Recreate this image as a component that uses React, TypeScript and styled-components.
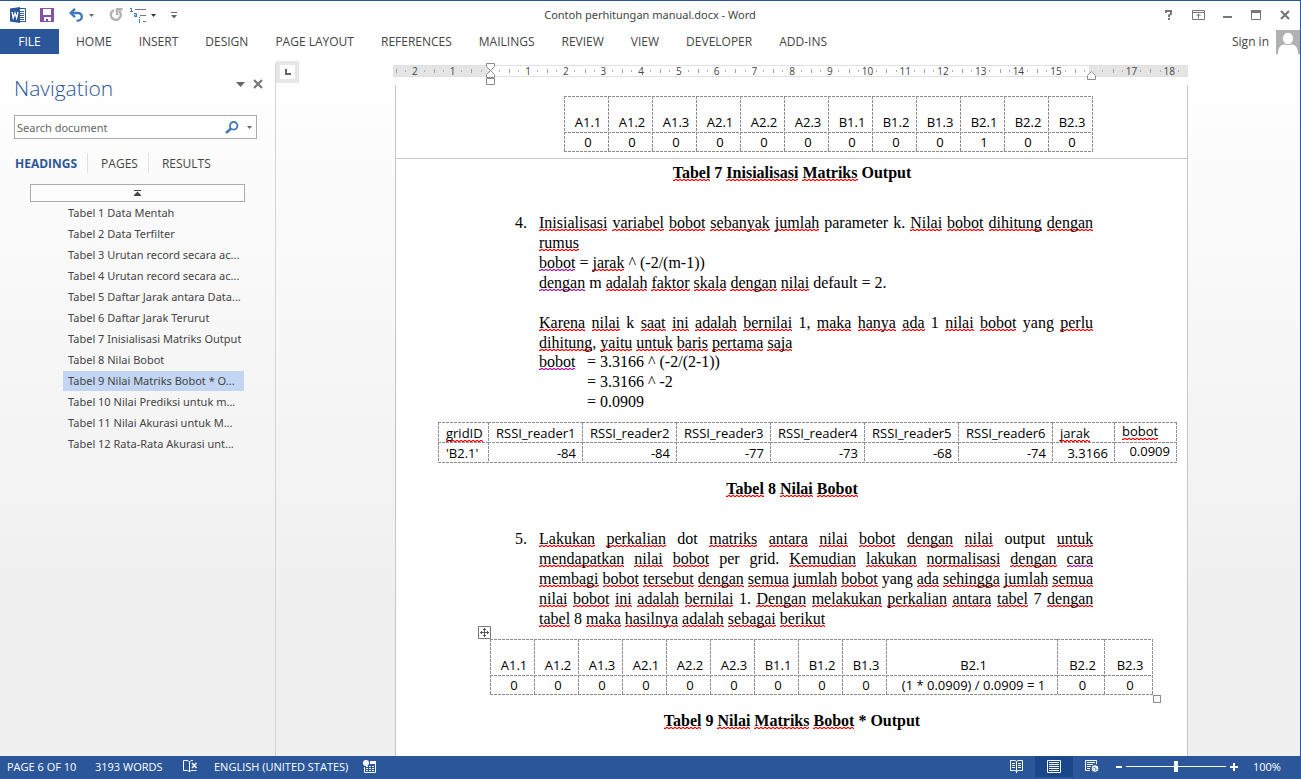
import React from "react";
import styled, { createGlobalStyle, css } from "styled-components";

const BLUE = "#2b579a";
const UI = '"Open Sans", "Noto Sans", sans-serif';
const UI_SMALL = '"Noto Sans", "Open Sans", sans-serif';
const SERIF = '"Liberation Serif", "Times New Roman", serif';

const GlobalStyle = createGlobalStyle`
  * { box-sizing: border-box; }
  body { margin: 0; font-family: ${UI}; font-size: 12px; color: #444; }
  button, input { font: inherit; color: inherit; }
  button { border: 0; padding: 0; background: none; }
  svg { display: block; }
`;

const Window = styled.div`
  display: flex;
  flex-direction: column;
  height: 100vh;
  border-top: 1px solid ${BLUE};
  border-right: 1px solid ${BLUE};
  background: linear-gradient(#fff 0, #fff 54px, #fdfdfd 120px, #efefef 620px);
`;

/* ---------- title bar ---------- */

const TitleBar = styled.header`
  display: grid;
  grid-template-columns: 1fr auto 1fr;
  align-items: center;
  flex: none;
  height: 28px;
`;

const QuickAccess = styled.div`
  display: flex;
  align-items: center;
  padding-left: 10px;
`;

const ToolButton = styled.button<{ $gap: number }>`
  display: flex;
  align-items: center;
  gap: 5px;
  margin-right: ${(p) => p.$gap}px;
`;

const DocTitle = styled.h1`
  margin: 0;
  font-family: ${UI_SMALL};
  font-size: 11px;
  font-weight: 400;
  line-height: 20px;
`;

const WindowButtons = styled.div`
  display: flex;
  justify-content: flex-end;
  align-items: center;
  gap: 15px;
  padding-right: 8px;
`;

const WindowButton = styled.button`
  display: flex;
  align-items: center;
  justify-content: center;
  width: 14px;
  height: 14px;
`;

/* ---------- ribbon ---------- */

const Ribbon = styled.nav`
  display: flex;
  align-items: center;
  flex: none;
  height: 25px;
`;

const FileTab = styled.button`
  width: 59px;
  height: 25px;
  margin-right: 17px;
  background: ${BLUE};
  color: #fff;
`;

const RibbonTab = styled.button`
  margin-right: 27px;
  line-height: 25px;
  white-space: nowrap;
`;

const Account = styled.div`
  display: flex;
  align-items: center;
  gap: 7px;
  margin-left: auto;
`;

/* ---------- navigation pane ---------- */

const Main = styled.div`
  display: flex;
  flex: 1;
  min-height: 0;
`;

const NavPane = styled.aside`
  flex: none;
  width: 276px;
  margin-top: 9px;
  padding: 9px 18px 0 14px;
  border-right: 1px solid #d4d4d4;
`;

const NavHead = styled.div`
  display: flex;
  align-items: center;
  height: 32px;
  margin-right: -6px;
`;

const NavTitle = styled.h2`
  flex: 1;
  margin: 0;
  color: ${BLUE};
  font-size: 21px;
  font-weight: 300;
  line-height: 32px;
`;

const PaneButton = styled.button`
  margin: 0 0 8px 8px;
`;

const SearchBox = styled.form`
  display: flex;
  align-items: center;
  height: 24px;
  margin-top: 11px;
  padding: 0 4px 0 2px;
  border: 1px solid #ababab;
  background: #fff;
`;

const SearchInput = styled.input`
  flex: 1;
  min-width: 0;
  padding: 0;
  border: 0;
  outline: 0;
  background: none;
  font-family: ${UI_SMALL};
  font-size: 11px;
  &::placeholder { color: #666; opacity: 1; }
`;

const PaneTabs = styled.div`
  display: flex;
  margin-top: 14px;
`;

const PaneTab = styled.button<{ $active?: boolean }>`
  height: 20px;
  padding: 0 10px 0 13px;
  border-left: 1px solid #e1e1e1;
  &:first-child { padding-left: 1px; border-left: 0; }
  ${(p) => p.$active && css`color: ${BLUE}; font-weight: 700;`}
`;

const JumpTop = styled.button`
  display: flex;
  align-items: center;
  justify-content: center;
  width: 215px;
  height: 18px;
  margin: 11px 0 0 16px;
  border: 1px solid #ababab;
  background: #fdfdfd;
`;

const HeadingList = styled.ul`
  margin: 1px 0 0 49px;
  padding: 0;
  list-style: none;
`;

const HeadingLink = styled.a<{ $current: boolean }>`
  display: block;
  width: 181px;
  height: 20px;
  margin-bottom: 1px;
  padding-left: 5px;
  background: ${(p) => (p.$current ? "#c2d5f2" : "transparent")};
  color: inherit;
  font-family: ${UI_SMALL};
  font-size: 11px;
  line-height: 20px;
  text-decoration: none;
  white-space: nowrap;
`;

/* ---------- document area ---------- */

const Workspace = styled.main`
  display: flex;
  flex: 1;
  min-width: 0;
  overflow: hidden;
`;

const TabSelector = styled.button`
  display: flex;
  align-items: center;
  justify-content: center;
  flex: none;
  width: 23px;
  height: 22px;
  margin-top: 7px;
  border: 4px solid #e6e6e6;
  background: #fdfdfd;
`;

const Canvas = styled.div`
  display: flex;
  flex-direction: column;
  align-items: center;
  flex: 1;
  padding: 11px 18px 0 0;
`;

const Sheet = styled.div`
  display: flex;
  flex-direction: column;
  flex: 1;
  width: 795px;
`;

const Ruler = styled.div`
  position: relative;
  display: flex;
  flex: none;
  height: 12px;
  margin-bottom: 8px;
  padding-left: 3px;
  border-top: 1px solid #e0e0e0;
  border-bottom: 1px solid #e0e0e0;
  background: linear-gradient(90deg, #e4e4e4 0 97px, #fff 97px calc(100% - 99px), #e4e4e4 calc(100% - 99px));
`;

const RulerCell = styled.span`
  flex: 1;
  background:
    linear-gradient(#a0a0a0, #a0a0a0) 0 50% / 1px 4px no-repeat,
    linear-gradient(#b0b0b0, #b0b0b0) 25% 50% / 1px 2px no-repeat,
    linear-gradient(#b0b0b0, #b0b0b0) 75% 50% / 1px 2px no-repeat;
  font-size: 10px;
  line-height: 11px;
  text-align: center;
`;

const IndentMarker = styled.svg<{ $side: "left" | "right" }>`
  position: absolute;
  ${(p) => (p.$side === "left" ? "left: 93px; top: -3px;" : "right: 92px; top: 5px;")}
`;

const Page = styled.article`
  flex: 1;
  margin-left: 2px;
  border: solid #c6c6c6;
  border-width: 0 1px;
  background: #fff;
  color: #000;
  font-family: ${SERIF};
  font-size: 16px;
  line-height: 20px;
`;

const PageTail = styled.section`
  padding: 11px 94px 6px 95px;
  border-bottom: 1px solid #c6c6c6;
`;

const PageBody = styled.section`
  padding: 4px 94px 0 95px;
`;

const Caption = styled.p`
  margin: 0;
  font-weight: 700;
  text-align: center;
`;

const Step = styled.div`
  display: grid;
  grid-template-columns: 24px 1fr;
  margin: 30px 0 10px 24px;
`;

const Para = styled.p<{ $spaced?: boolean }>`
  margin: ${(p) => (p.$spaced ? "20px 0 0" : "0")};
  text-align: justify;
`;

/* A line whose words must stay together, stretched to the measure. */
const FullLine = styled.span`
  display: block;
  text-align-last: justify;
  white-space: nowrap;
`;

const Formula = styled.div`
  display: grid;
  grid-template-columns: 48px 1fr;
  margin-top: -1px;
`;

const Squiggle = styled.span<{ $context: boolean }>`
  --mark: ${(p) => (p.$context ? "#c0108c" : "#ff0000")};
  --fade: ${(p) => (p.$context ? "#a040ff66" : "#ff000055")};
  background:
    repeating-linear-gradient(90deg, var(--mark) 0 2px, var(--fade) 2px 4px) 0 100% / 100% 1px no-repeat,
    repeating-linear-gradient(90deg, var(--fade) 0 2px, var(--mark) 2px 4px) 0 calc(100% - 1px) / 100% 1px no-repeat;
`;

const dashX = "repeating-linear-gradient(90deg, #8c8c8c 0 3px, transparent 3px 4px)";
const dashY = "repeating-linear-gradient(#8c8c8c 0 3px, transparent 3px 4px)";

const GridHolder = styled.div<{ $place: "right" | "wide" | "left" }>`
  position: relative;
  width: fit-content;
  margin-left: ${(p) => ({ right: "auto", wide: "-53px", left: "-1px" })[p.$place]};
  margin-bottom: ${(p) => (p.$place === "right" ? 0 : 16)}px;
`;

const Grid = styled.table`
  table-layout: fixed;
  border-spacing: 0;
  padding: 0 1px 1px 0;
  background: ${dashX} 0 100% / 100% 1px no-repeat, ${dashY} 100% 0 / 1px 100% no-repeat;
  font-family: ${UI};
  font-size: 13px;
  line-height: 18px;
`;

const cell = css<{ $align?: string; $raised?: boolean }>`
  padding: ${(p) => (p.$raised ? "0 6px 2px 8px" : p.$align === "center" ? "1px 4px 0 8px" : "1px 6px 0 8px")};
  background: ${dashX} 0 0 / 100% 1px no-repeat, ${dashY} 0 0 / 1px 100% no-repeat;
  font-weight: 400;
  white-space: nowrap;
`;

const HeadCell = styled.th<{ $tall?: boolean; $align?: string; $raised?: boolean }>`
  ${cell}
  height: ${(p) => (p.$tall ? 36 : 20)}px;
  ${(p) => p.$tall && "padding-bottom: 1px;"}
  text-align: ${(p) => p.$align ?? "left"};
  vertical-align: bottom;
`;

const DataCell = styled.td<{ $align?: string; $raised?: boolean }>`
  ${cell}
  height: 19px;
  text-align: ${(p) => p.$align ?? "left"};
`;

const MoveHandle = styled.button`
  position: absolute;
  left: -12px;
  top: -13px;
`;

const ResizeHandle = styled.span`
  position: absolute;
  right: -8px;
  bottom: -8px;
  width: 8px;
  height: 8px;
  border: 1px solid #8c8c8c;
  background: #fff;
`;

/* ---------- status bar ---------- */

const StatusBar = styled.footer`
  display: flex;
  align-items: center;
  flex: none;
  height: 23px;
  margin-right: -1px;
  padding: 0 21px 2px 7px;
  background: ${BLUE};
  color: #fff;
  font-size: 11px;
`;

const StatusItem = styled.button<{ $width: number }>`
  width: ${(p) => p.$width}px;
  text-align: left;
  white-space: nowrap;
`;

const ViewButton = styled.button<{ $active?: boolean }>`
  display: flex;
  align-items: center;
  justify-content: center;
  width: 38px;
  height: 21px;
  background: ${(p) => (p.$active ? "#19478a" : "transparent")};
`;

const Views = styled.div`
  display: flex;
  margin-left: auto;
  margin-right: 5px;
`;

const ZoomSlider = styled.input`
  appearance: none;
  width: 100px;
  height: 12px;
  margin: 0 4px;
  background: linear-gradient(#fff, #fff) 0 50% / 100% 1px no-repeat;
  &::-webkit-slider-thumb {
    appearance: none;
    width: 4px;
    height: 11px;
    background: #fff;
  }
`;

const ZoomLevel = styled.button`
  width: 27px;
  margin-left: 15px;
  white-space: nowrap;
`;

/* ---------- icons ---------- */

const Caret = ({ color = "#666", w = 5 }: { color?: string; w?: number }) => (
  <svg width={w} height={Math.ceil(w / 2)} viewBox="0 0 6 3" preserveAspectRatio="none"><path d="M0 0h6L3 3z" fill={color} /></svg>
);

const WordIcon = () => (
  <svg width="16" height="16" viewBox="0 0 16 16">
    <path d="M9 1.5h6.5v13H9z" fill="#fff" stroke={BLUE} />
    <path d="M10 4.5h4M10 6.5h4M10 8.5h4M10 10.5h4M10 12.5h4" stroke={BLUE} />
    <path d="M0 1.6 10 0v16L0 14.4z" fill={BLUE} />
    <path d="m2 5 1.2 6L5 6l1.6 5L8 5" fill="none" stroke="#fff" strokeWidth="1.3" />
  </svg>
);

const SaveIcon = () => (
  <svg width="14" height="14" viewBox="0 0 14 14">
    <path d="M0 0h14v14H0z" fill="#8453a8" />
    <path d="M3 1h8v6H3zM4 9h7v4H8v-2H6v2H4z" fill="#fff" />
  </svg>
);

const UndoIcon = () => (
  <svg width="15" height="14" viewBox="0 0 15 14" fill="none" stroke="#4379b8" strokeWidth="2.4">
    <path d="M1.5 5H9a3.800 3.800 0 0 1 0 7.600H7.500" />
    <path d="M6 .8 1.700 5 6 9.200" />
  </svg>
);

const RedoIcon = () => (
  <svg width="14" height="14" viewBox="0 0 14 14" fill="none" stroke="#b1b1b1" strokeWidth="2.400">
    <path d="M5 2.200A5 5 0 1 0 10 3" />
    <path d="M8 7V1.200h5.500" />
  </svg>
);

const ListIcon = () => (
  <svg width="16" height="16" viewBox="0 0 16 16" fill="none">
    <path d="M0 1.500h1.500V5M0 4.500h3M4 6.500h2.500V10M7 9.500H4.500V8H6M9.500 10v1m0 1v4" stroke="#4379b8" />
    <path d="M5 2.500h11M10 8.500h6M13 14.500h3" stroke="#777" />
  </svg>
);

const CustomizeIcon = () => (
  <svg width="6" height="7" viewBox="0 0 6 7"><path d="M0 .5h6" stroke="#666" /><path d="M0 3h6L3 6.500z" fill="#666" /></svg>
);

const HelpIcon = () => (
  <svg width="8" height="10" viewBox="0 0 8 10" fill="none" stroke="#777" strokeWidth="2">
    <path d="M1 3V1h5v3L4 5.200V7M4 8v2" />
  </svg>
);

const RibbonDisplayIcon = () => (
  <svg width="13" height="10" viewBox="0 0 13 10" fill="none" stroke="#777">
    <path d="M.5.5h12v9H.5zM.5 2.500h12M6.500 8.500V4M4.500 6l2-2 2 2" />
  </svg>
);

const MinimizeIcon = () => <svg width="9" height="10" viewBox="0 0 9 10"><path d="M0 6h9v2H0z" fill="#777" /></svg>;

const MaximizeIcon = () => (
  <svg width="10" height="10" viewBox="0 0 10 10"><path d="M.5.5h9v9h-9z" fill="none" stroke="#777" /><path d="M0 0h10v3H0z" fill="#777" /></svg>
);

const CloseIcon = () => (
  <svg width="10" height="10" viewBox="0 0 10 10"><path d="m1 1 8 8M9 1 1 9" stroke="#777" strokeWidth="2.200" /></svg>
);

const Avatar = () => (
  <svg width="24" height="24" viewBox="0 0 24 24">
    <path d="M0 0h24v24H0z" fill="#b1b1b1" />
    <path d="M2 24c0-6 2-9 6-9.500h8c4 .5 6 3.500 6 9.500z" fill="#fff" />
    <ellipse cx="12" cy="8.500" rx="5.500" ry="6.300" fill="#fff" stroke="#b1b1b1" />
  </svg>
);

const SearchIcon = () => (
  <svg width="14" height="13" viewBox="0 0 14 13" fill="none" stroke="#4379b8">
    <circle cx="8.700" cy="4.800" r="3.800" strokeWidth="1.800" />
    <path d="M6 7.500 1 12" strokeWidth="2.500" />
  </svg>
);

const JumpIcon = () => (
  <svg width="7" height="6" viewBox="0 0 7 6"><path d="M0 0h7v1H0zM3.500 1.500 7 5v1H0V5z" fill="#444" /></svg>
);

const ProofIcon = () => (
  <svg width="15" height="13" viewBox="0 0 15 13" fill="none" stroke="#fff">
    <path d="M6.500 12V2L5 .5H.5v10H5L6.500 12 8 10.500h5.500M6.500 2 8 .5h2" />
    <path d="m9 3 4.500 5M13.500 3 9 8" strokeWidth="1.500" />
  </svg>
);

const MacroIcon = () => (
  <svg width="13" height="13" viewBox="0 0 13 13">
    <circle cx="3" cy="3" r="3" fill="#fff" />
    <path d="M7 1h6v3H7z" fill="#fff" />
    <path d="M1.500 7v5.500h11V3M3 6.500h2M6 6.500h2M9 6.500h2M3 8.500h2M6 8.500h2M9 8.500h2M3 10.500h2M6 10.500h2M9 10.500h2" fill="none" stroke="#fff" />
  </svg>
);

const ReadIcon = () => (
  <svg width="13" height="13" viewBox="0 0 13 13" fill="none" stroke="#fff">
    <path d="M6.500 13V1.500L5 .5H.5v10H5l1.500 1 1.500-1h4.500V.5H8l-1.500 1M2 3.500h3M2 5.500h3M2 7.500h3M8 3.500h3M8 5.500h3M8 7.500h3" />
  </svg>
);

const PrintIcon = () => (
  <svg width="14" height="13" viewBox="0 0 14 13" fill="none" stroke="#fff">
    <path d="M.5.5h13v12H.5zM2 2.500h10M2 4.500h10M2 6.500h10M2 8.500h10M2 10.500h10" />
  </svg>
);

const WebIcon = () => (
  <svg width="14" height="13" viewBox="0 0 14 13" fill="none" stroke="#fff">
    <path d="M5 10.500H.5V.5h11V4M2 2.500h8M2 4.500h6M2 6.500h4M2 8.500h3" />
    <circle cx="10" cy="8.500" r="3.800" fill="#fff" stroke={BLUE} />
    <path d="M8 8.500c1-2 2-.5 3 0s0 2-1 1.500" stroke={BLUE} />
  </svg>
);

/* ---------- content ---------- */

const ribbonTabs = ["HOME", "INSERT", "DESIGN", "PAGE LAYOUT", "REFERENCES", "MAILINGS", "REVIEW", "VIEW", "DEVELOPER", "ADD-INS"];

const headings = [
  "Tabel 1 Data Mentah",
  "Tabel 2 Data Terfilter",
  "Tabel 3 Urutan record secara ac...",
  "Tabel 4 Urutan record secara ac...",
  "Tabel 5 Daftar Jarak antara Data...",
  "Tabel 6 Daftar Jarak Terurut",
  "Tabel 7 Inisialisasi Matriks Output",
  "Tabel 8 Nilai Bobot",
  "Tabel 9 Nilai Matriks Bobot * O...",
  "Tabel 10 Nilai Prediksi untuk m...",
  "Tabel 11 Nilai Akurasi untuk M...",
  "Tabel 12 Rata-Rata Akurasi unt...",
];

const rulerLabels = ["2", "1", "", ...Array.from({ length: 15 }, (_, i) => String(i + 1)), "", "17", "18"];

const gridNames = ["A1.1", "A1.2", "A1.3", "A2.1", "A2.2", "A2.3", "B1.1", "B1.2", "B1.3", "B2.1", "B2.2", "B2.3"];

const weightColumns: [string, string, number][] = [
  ["gridID", "'B2.1'", 50],
  ["RSSI_reader1", "-84", 94],
  ["RSSI_reader2", "-84", 94],
  ["RSSI_reader3", "-77", 94],
  ["RSSI_reader4", "-73", 94],
  ["RSSI_reader5", "-68", 94],
  ["RSSI_reader6", "-74", 94],
  ["jarak", "3.3166", 62],
  ["bobot", "0.0909", 62],
];

/* Words the English proofing dictionary accepts; "~" before a word marks a contextual error. */
const accepted = new Set(["parameter", "k", "m", "default", "yang", "dot", "output", "per", "grid"]);

const Proofed = ({ children }: { children: string }) => (
  <>
    {children.split(/(~?[A-Za-z]+)/).map((part, i) => {
      const word = part.replace("~", "");
      return i % 2 === 1 && !accepted.has(word.toLowerCase())
        ? <Squiggle key={i} $context={part !== word}>{word}</Squiggle>
        : word;
    })}
  </>
);

const MatrixTable = ({ values, widths }: { values: string[]; widths: number[] }) => (
  <Grid style={{ width: widths.reduce((a, b) => a + b, 1) }}>
    <colgroup>{widths.map((w, i) => <col key={i} style={{ width: w }} />)}</colgroup>
    <thead>
      <tr>{gridNames.map((n) => <HeadCell key={n} $tall $align="center">{n}</HeadCell>)}</tr>
    </thead>
    <tbody>
      <tr>{values.map((v, i) => <DataCell key={i} $align="center">{v}</DataCell>)}</tr>
    </tbody>
  </Grid>
);

const initialValues = gridNames.map((n) => (n === "B2.1" ? "1" : "0"));
const resultValues = gridNames.map((n) => (n === "B2.1" ? "(1 * 0.0909) / 0.0909 = 1" : "0"));
const evenWidths = gridNames.map(() => 44);
const resultWidths = [...evenWidths.slice(0, 9), 171, 47, 48];

const multiplyLines = [
  "Lakukan perkalian dot matriks antara nilai bobot dengan nilai output untuk",
  "mendapatkan nilai bobot per grid. Kemudian lakukan normalisasi dengan ~cara",
  "membagi bobot tersebut dengan semua jumlah bobot yang ada sehingga jumlah semua",
  "nilai bobot ini adalah bernilai 1. Dengan melakukan perkalian antara tabel 7 dengan",
];

export default function App() {
  return (
    <>
      <GlobalStyle />
      <Window>
        <TitleBar>
          <QuickAccess>
            <ToolButton $gap={14} aria-label="Word"><WordIcon /></ToolButton>
            <ToolButton $gap={15} aria-label="Save"><SaveIcon /></ToolButton>
            <ToolButton $gap={15} aria-label="Undo"><UndoIcon /><Caret /></ToolButton>
            <ToolButton $gap={7} aria-label="Redo"><RedoIcon /></ToolButton>
            <ToolButton $gap={15} aria-label="Multilevel list"><ListIcon /><Caret color="#333" /></ToolButton>
            <ToolButton $gap={0} aria-label="Customize Quick Access Toolbar"><CustomizeIcon /></ToolButton>
          </QuickAccess>
          <DocTitle>Contoh perhitungan manual.docx - Word</DocTitle>
          <WindowButtons>
            <WindowButton aria-label="Help"><HelpIcon /></WindowButton>
            <WindowButton aria-label="Ribbon Display Options"><RibbonDisplayIcon /></WindowButton>
            <WindowButton aria-label="Minimize"><MinimizeIcon /></WindowButton>
            <WindowButton aria-label="Maximize"><MaximizeIcon /></WindowButton>
            <WindowButton aria-label="Close"><CloseIcon /></WindowButton>
          </WindowButtons>
        </TitleBar>

        <Ribbon>
          <FileTab>FILE</FileTab>
          {ribbonTabs.map((t) => <RibbonTab key={t}>{t}</RibbonTab>)}
          <Account><button>Sign in</button><Avatar /></Account>
        </Ribbon>

        <Main>
          <NavPane>
            <NavHead>
              <NavTitle>Navigation</NavTitle>
              <PaneButton aria-label="Task pane options"><Caret w={9} /></PaneButton>
              <PaneButton aria-label="Close pane"><CloseIcon /></PaneButton>
            </NavHead>
            <SearchBox>
              <SearchInput type="text" aria-label="Search document" placeholder="Search document" />
              <ToolButton $gap={8} type="button" aria-label="Search"><SearchIcon /></ToolButton>
              <ToolButton $gap={0} type="button" aria-label="Search options"><Caret /></ToolButton>
            </SearchBox>
            <PaneTabs>
              <PaneTab $active>HEADINGS</PaneTab>
              <PaneTab>PAGES</PaneTab>
              <PaneTab>RESULTS</PaneTab>
            </PaneTabs>
            <JumpTop aria-label="Jump to the beginning"><JumpIcon /></JumpTop>
            <HeadingList>
              {headings.map((h, i) => (
                <li key={h}><HeadingLink href={`#heading-${i + 1}`} $current={i === 8}>{h}</HeadingLink></li>
              ))}
            </HeadingList>
          </NavPane>

          <Workspace>
            <TabSelector aria-label="Left tab">
              <svg width="6" height="6" viewBox="0 0 6 6"><path d="M1 0v5h5" fill="none" stroke="#666" strokeWidth="2" /></svg>
            </TabSelector>
            <Canvas>
              <Sheet>
                <Ruler>
                  {rulerLabels.map((l, i) => <RulerCell key={i}>{l}</RulerCell>)}
                  <IndentMarker $side="left" width="9" height="22" viewBox="0 0 9 22" fill="#fff" stroke="#8c8c8c">
                    <path d="M.5.5h8v3l-4 4-4-4zM.5 14.500v-3l4-4 4 4v3zM.5 15.500h8v6h-8z" />
                  </IndentMarker>
                  <IndentMarker $side="right" width="9" height="9" viewBox="0 0 9 9" fill="#fff" stroke="#8c8c8c">
                    <path d="M.5 8.500v-4l4-4 4 4v4z" />
                  </IndentMarker>
                </Ruler>

                <Page>
                  <PageTail>
                    <GridHolder $place="right">
                      <MatrixTable values={initialValues} widths={evenWidths} />
                    </GridHolder>
                  </PageTail>
                  <PageBody>
                    <Caption><Proofed>Tabel 7 Inisialisasi Matriks Output</Proofed></Caption>

                    <Step>
                      <span>4.</span>
                      <div>
                        <Para><Proofed>Inisialisasi variabel bobot sebanyak jumlah parameter k. Nilai bobot dihitung dengan rumus</Proofed></Para>
                        <Para><Proofed>~bobot = jarak ^ (-2/(m-1))</Proofed></Para>
                        <Para><Proofed>~dengan m adalah faktor skala dengan nilai default = 2.</Proofed></Para>
                        <Para $spaced><Proofed>Karena nilai k saat ini adalah bernilai 1, maka hanya ada 1 nilai bobot yang perlu dihitung, yaitu untuk baris pertama saja</Proofed></Para>
                        <Formula>
                          <span><Proofed>~bobot</Proofed></span>
                          <span>= 3.3166 ^ (-2/(2-1))<br />= 3.3166 ^ -2<br />= 0.0909</span>
                        </Formula>
                      </div>
                    </Step>

                    <GridHolder $place="wide">
                      <Grid style={{ width: weightColumns.reduce((a, c) => a + c[2], 1) }}>
                        <colgroup>{weightColumns.map(([name, , w]) => <col key={name} style={{ width: w }} />)}</colgroup>
                        <thead>
                          <tr>
                            {weightColumns.map(([name], i) => (
                              <HeadCell key={name} $raised={i === 8}>
                                {name.startsWith("RSSI") ? name : <Proofed>{name}</Proofed>}
                              </HeadCell>
                            ))}
                          </tr>
                        </thead>
                        <tbody>
                          <tr>
                            {weightColumns.map(([name, value], i) => (
                              <DataCell key={name} $raised={i === 8} $align={i ? "right" : "left"}>{value}</DataCell>
                            ))}
                          </tr>
                        </tbody>
                      </Grid>
                    </GridHolder>
                    <Caption><Proofed>Tabel 8 Nilai Bobot</Proofed></Caption>

                    <Step>
                      <span>5.</span>
                      <Para>
                        {multiplyLines.map((line) => <FullLine key={line}><Proofed>{line}</Proofed></FullLine>)}
                        <Proofed>tabel 8 maka hasilnya adalah sebagai berikut</Proofed>
                      </Para>
                    </Step>

                    <GridHolder $place="left">
                      <MatrixTable values={resultValues} widths={resultWidths} />
                      <MoveHandle aria-label="Move table">
                        <svg width="13" height="13" viewBox="0 0 13 13" fill="none" stroke="#777">
                          <path d="M.5.5h12v12H.5z" fill="#fff" />
                          <path d="M6.500 2v9M2 6.500h9M5 3.500h3M5 9.500h3M3.500 5v3M9.500 5v3" stroke="#555" />
                        </svg>
                      </MoveHandle>
                      <ResizeHandle />
                    </GridHolder>
                    <Caption><Proofed>Tabel 9 Nilai Matriks Bobot * Output</Proofed></Caption>
                  </PageBody>
                </Page>
              </Sheet>
            </Canvas>
          </Workspace>
        </Main>

        <StatusBar>
          <StatusItem $width={88}>PAGE 6 OF 10</StatusItem>
          <StatusItem $width={88}>3193 WORDS</StatusItem>
          <StatusItem $width={31} aria-label="Proofing errors"><ProofIcon /></StatusItem>
          <StatusItem $width={149}>ENGLISH (UNITED STATES)</StatusItem>
          <StatusItem $width={13} aria-label="Record macro"><MacroIcon /></StatusItem>
          <Views>
            <ViewButton aria-label="Read mode"><ReadIcon /></ViewButton>
            <ViewButton $active aria-label="Print layout"><PrintIcon /></ViewButton>
            <ViewButton aria-label="Web layout"><WebIcon /></ViewButton>
          </Views>
          <button aria-label="Zoom out"><svg width="6" height="8" viewBox="0 0 6 8"><path d="M0 3h6v2H0z" fill="#fff" /></svg></button>
          <ZoomSlider type="range" aria-label="Zoom" min={0} max={100} defaultValue={50} />
          <button aria-label="Zoom in"><svg width="8" height="8" viewBox="0 0 8 8"><path d="M0 3h3V0h2v3h3v2H5v3H3V5H0z" fill="#fff" /></svg></button>
          <ZoomLevel>100%</ZoomLevel>
        </StatusBar>
      </Window>
    </>
  );
}
